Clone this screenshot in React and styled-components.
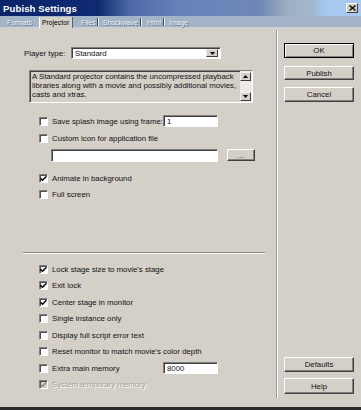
import React from 'react';
import styled, { createGlobalStyle } from 'styled-components';

const Global = createGlobalStyle`
  html, body { margin: 0; padding: 0; background: #d4d0c8; }
  body { font-family: "Liberation Sans", Arial, sans-serif; }
  * { box-sizing: border-box; }
`;

const Window = styled.div`
  width: 361px;
  height: 410px;
  display: flex;
  flex-direction: column;
  background: #d4d0c8;
  overflow: hidden;
  font-family: "Liberation Sans", Arial, sans-serif;
  font-size: 7.8px;
  color: #111;
`;

const TitleBar = styled.div`
  height: 16px;
  flex: none;
  display: flex;
  align-items: center;
  justify-content: space-between;
  padding: 0 3px 0 3px;
  background: linear-gradient(to right, #0a246a 0%, #0e2a70 27%, #4c6aa6 36%, #6683ba 50%, #7088b8 72%, #a0b0c2 80%, #a2b6cc 86%, #a6c8ee 90%, #a6caf0 100%);
`;

const Title = styled.span`
  color: #fff;
  font-weight: bold;
  font-size: 9.6px;
  letter-spacing: 0.1px;
`;

const CloseButton = styled.div`
  width: 12px;
  height: 10px;
  background: #d4d0c8;
  border: 1px solid;
  border-color: #fff #404040 #404040 #fff;
  display: flex;
  align-items: center;
  justify-content: center;
`;

const TabStrip = styled.div`
  height: 12px;
  flex: none;
  display: flex;
  align-items: stretch;
  background: #a3b3c8;
  border-bottom: 1px solid #c8d0dc;
`;

const Tab = styled.div`
  display: flex;
  align-items: center;
  width: ${p => (p.$w ? `${p.$w}px` : 'auto')};
  flex: none;
  padding-left: ${p => p.$pl}px;
  margin-left: ${p => p.$ml ?? 0}px;
  font-size: 6.8px;
  white-space: nowrap;
  color: ${p => (p.$active ? '#000' : '#eef1f6')};
  text-shadow: ${p => (p.$active ? 'none' : '1px 1px 0 #6c7c94')};
  background: ${p => (p.$active ? '#d4d0c8' : 'transparent')};
  border-left: ${p => (p.$active ? '1px solid #fff' : 'none')};
  border-right: ${p => (p.$active ? '1px solid #606060' : p.$sep ? '1px solid #3c4a60' : 'none')};
  box-shadow: ${p => (p.$sep && !p.$active ? '1px 0 0 #e8eef6' : 'none')};
  margin-top: ${p => (p.$active ? 1 : 2)}px;
  margin-bottom: ${p => (p.$active ? -1 : 1)}px;
`;

const Body = styled.div`
  flex: 1;
  display: flex;
  min-height: 0;
`;

const LeftPanel = styled.div`
  width: 276px;
  flex: none;
  display: flex;
  flex-direction: column;
`;

const VSeparator = styled.div`
  width: 2px;
  flex: none;
  margin: 2px 0 9px;
  border-left: 1px solid #8c9ab0;
  border-right: 1px solid #fff;
`;

const RightColumn = styled.div`
  flex: 1;
  display: flex;
  flex-direction: column;
  padding: 15px 0 13px 6px;
`;

const ButtonSpacer = styled.div`
  flex: 1;
`;

const Button = styled.div`
  width: 70px;
  height: ${p => p.$h ?? 15}px;
  margin-top: ${p => p.$mt ?? 0}px;
  display: flex;
  align-items: center;
  justify-content: center;
  font-size: 7.8px;
  background: #d4d0c8;
  border: 1px solid;
  border-color: ${p => (p.$default ? '#000' : '#fff #404040 #404040 #fff')};
  box-shadow: ${p =>
    p.$default
      ? 'inset 1px 1px 0 #fff, inset -1px -1px 0 #808080'
      : 'inset -1px -1px 0 #808080'};
`;

const BottomEdge = styled.div`
  height: 3px;
  flex: none;
  background: #2c2c2c;
`;

const Row = styled.div`
  display: flex;
  align-items: center;
  height: ${p => p.$h}px;
  margin-top: ${p => p.$mt ?? 0}px;
  padding-left: ${p => p.$pl ?? 39}px;
  flex: none;
`;

const FieldLabel = styled.span`
  width: ${p => p.$w}px;
  flex: none;
  white-space: nowrap;
`;

const CheckText = styled.span`
  white-space: nowrap;
  width: ${p => (p.$w ? `${p.$w}px` : 'auto')};
  flex: none;
  color: ${p => (p.$disabled ? '#a4a19a' : '#111')};
  text-shadow: ${p => (p.$disabled ? '1px 1px 0 #fff' : 'none')};
`;

const Box = styled.span`
  width: 9px;
  height: 9px;
  flex: none;
  margin-right: 4px;
  display: flex;
  align-items: center;
  justify-content: center;
  background: ${p => (p.$disabled ? '#d4d0c8' : '#fff')};
  border: 1px solid;
  border-color: #808080 #fff #fff #808080;
  box-shadow: inset 1px 1px 0 #505050;
`;

const TextField = styled.div`
  width: ${p => p.$w}px;
  height: ${p => p.$h ?? 12}px;
  flex: none;
  display: flex;
  align-items: center;
  padding-left: 3px;
  background: #fff;
  border: 1px solid;
  border-color: #808080 #fff #fff #808080;
  box-shadow: inset 1px 1px 0 #404040;
`;

const Select = styled.div`
  width: 150px;
  height: 12px;
  flex: none;
  display: flex;
  align-items: stretch;
  background: #fff;
  border: 1px solid;
  border-color: #808080 #fff #fff #808080;
  box-shadow: inset 1px 1px 0 #404040;
`;

const SelectValue = styled.span`
  flex: 1;
  padding-left: 3px;
  display: flex;
  align-items: center;
`;

const ArrowButton = styled.span`
  width: 12px;
  flex: none;
  display: flex;
  align-items: center;
  justify-content: center;
  background: #d4d0c8;
  border: 1px solid;
  border-color: #e8e8e8 #404040 #404040 #e8e8e8;
  margin: 1px 2px 1px 0;
`;

const DescBox = styled.div`
  width: 224px;
  height: 33px;
  margin: 11px 0 0 29px;
  flex: none;
  display: flex;
  border: 1px solid;
  border-color: #808080 #fff #fff #808080;
  box-shadow: inset 1px 1px 0 #404040;
  background: #d4d0c8;
`;

const DescText = styled.div`
  flex: 1;
  padding: 2px 0 0 2px;
  line-height: 8.8px;
  font-size: 7.8px;
  white-space: nowrap;
  overflow: hidden;
`;

const ScrollBar = styled.div`
  width: 12px;
  flex: none;
  display: flex;
  flex-direction: column;
  justify-content: space-between;
  padding: 1px 1px 1px 0;
  background: #ecebe6;
`;

const ScrollArrow = styled.span`
  height: 9px;
  display: flex;
  align-items: center;
  justify-content: center;
  background: #d4d0c8;
  border: 1px solid;
  border-color: #f0f0f0 #404040 #404040 #f0f0f0;
`;

const SmallButton = styled.div`
  width: 28px;
  height: 12px;
  margin-left: 9px;
  flex: none;
  display: flex;
  align-items: center;
  justify-content: center;
  font-size: 7px;
  letter-spacing: 0.5px;
  background: #d4d0c8;
  border: 1px solid;
  border-color: #fff #404040 #404040 #fff;
  box-shadow: inset -1px -1px 0 #808080;
`;

const HSeparator = styled.div`
  height: 2px;
  width: 242px;
  margin: ${p => p.$mt}px 0 0 23px;
  flex: none;
  border-top: 1px solid #8a8a86;
  border-bottom: 1px solid #fff;
`;

const ListGap = styled.div`
  height: 7px;
  flex: none;
`;

const Check = ({ color = '#000' }) => (
  <svg width="7" height="7" viewBox="0 0 7 7">
    <path d="M0.5 3.2 L2.5 5.3 L6.5 1.2" fill="none" stroke={color} strokeWidth="1.4" />
  </svg>
);

const Checkbox = ({ checked, disabled }) => (
  <Box $disabled={disabled}>{checked && <Check color={disabled ? '#8a8a8a' : '#000'} />}</Box>
);

const Down = () => (
  <svg width="5" height="3" viewBox="0 0 5 3">
    <path d="M0 0 H5 L2.5 3 Z" fill="#000" />
  </svg>
);
const Up = () => (
  <svg width="5" height="3" viewBox="0 0 5 3">
    <path d="M0 3 H5 L2.5 0 Z" fill="#000" />
  </svg>
);

const lowerOptions = [
  { label: "Lock stage size to movie's stage", checked: true },
  { label: 'Exit lock', checked: true },
  { label: 'Center stage in monitor', checked: true },
  { label: 'Single instance only', checked: false },
  { label: 'Display full script error text', checked: false },
  { label: "Reset monitor to match movie's color depth", checked: false },
  { label: 'Extra main memory', checked: false, value: '8000' },
  { label: 'System temporary memory', checked: true, disabled: true },
];

const tabs = [
  { label: 'Formats', w: 37, pl: 7 },
  { label: 'Projector', active: true, w: 34, pl: 2, ml: 2 },
  { label: 'Files', sep: true, w: 25, pl: 8 },
  { label: 'Shockwave', sep: true, w: 43, pl: 5 },
  { label: 'Html', sep: true, w: 23, pl: 6 },
  { label: 'Image', pl: 5 },
];

export default function App() {
  return (
    <>
      <Global />
      <Window>
        <TitleBar>
          <Title>Pubish Settings</Title>
          <CloseButton>
            <svg width="7" height="6" viewBox="0 0 7 6">
              <path d="M0.5 0.5 L6.5 5.5 M6.5 0.5 L0.5 5.5" stroke="#000" strokeWidth="1.3" />
            </svg>
          </CloseButton>
        </TitleBar>
        <TabStrip>
          {tabs.map(t => (
            <Tab key={t.label} $active={t.active} $sep={t.sep} $w={t.w} $pl={t.pl} $ml={t.ml}>
              {t.label}
            </Tab>
          ))}
        </TabStrip>
        <Body>
          <LeftPanel>
            <Row $h={12} $mt={19} $pl={24}>
              <FieldLabel $w={47}>Player type:</FieldLabel>
              <Select>
                <SelectValue>Standard</SelectValue>
                <ArrowButton>
                  <Down />
                </ArrowButton>
              </Select>
            </Row>
            <DescBox>
              <DescText>
                A Standard projector contains the uncompressed playback
                <br />
                libraries along with a movie and possibly additional movies,
                <br />
                casts and xtras.
              </DescText>
              <ScrollBar>
                <ScrollArrow>
                  <Up />
                </ScrollArrow>
                <ScrollArrow>
                  <Down />
                </ScrollArrow>
              </ScrollBar>
            </DescBox>
            <Row $h={12} $mt={12}>
              <Checkbox />
              <CheckText $w={111}>Save splash image using frame:</CheckText>
              <TextField $w={55}>1</TextField>
            </Row>
            <Row $h={12} $mt={5}>
              <Checkbox />
              <CheckText>Custom icon for application file</CheckText>
            </Row>
            <Row $h={14} $mt={4} $pl={51}>
              <TextField $w={167} $h={13} />
              <SmallButton>...</SmallButton>
            </Row>
            <Row $h={12} $mt={10}>
              <Checkbox checked />
              <CheckText>Animate in background</CheckText>
            </Row>
            <Row $h={12} $mt={4}>
              <Checkbox />
              <CheckText>Full screen</CheckText>
            </Row>
            <HSeparator $mt={52} />
            <ListGap />
            {lowerOptions.map(o => (
              <Row key={o.label} $h={16.5}>
                <Checkbox checked={o.checked} disabled={o.disabled} />
                <CheckText $disabled={o.disabled} $w={o.value ? 111 : 0}>
                  {o.label}
                </CheckText>
                {o.value && <TextField $w={55}>{o.value}</TextField>}
              </Row>
            ))}
          </LeftPanel>
          <VSeparator />
          <RightColumn>
            <Button $default>OK</Button>
            <Button $mt={8} $h={14}>
              Publish
            </Button>
            <Button $mt={7}>Cancel</Button>
            <ButtonSpacer />
            <Button>Defaults</Button>
            <Button $mt={6} $h={16}>
              Help
            </Button>
          </RightColumn>
        </Body>
        <BottomEdge />
      </Window>
    </>
  );
}
